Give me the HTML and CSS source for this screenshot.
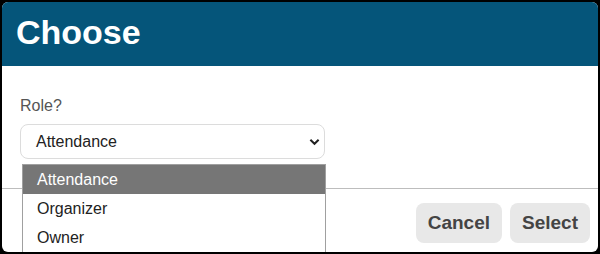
FILE: index.html
```html
<!DOCTYPE html>
<html lang="en">
<head>
    <meta charset="UTF-8">
    <title>Choose</title>
    <link rel="stylesheet" href="styles.css">
</head>
<body>
    <div class="dialog">
        <div class="dialog-header">
            <h1>Choose</h1>
        </div>
        <div class="dialog-body">
            <div class="field-label">Role?</div>
            <div class="select-box">
                <span>Attendance</span>
                <svg class="chevron" viewBox="0 0 12 8"><polyline points="1.5,1.5 6,6 10.5,1.5" fill="none" stroke="#222" stroke-width="2.2"/></svg>
            </div>
        </div>
        <div class="dialog-footer">
            <button class="btn">Cancel</button>
            <button class="btn">Select</button>
        </div>
        <div class="options">
            <div class="option selected">Attendance</div>
            <div class="option">Organizer</div>
            <div class="option">Owner</div>
        </div>
    </div>
</body>
</html>
```

FILE: styles.css
```css
body {
    background-color: #000;
    margin: 0;
    padding: 2px;
    font-family: "Liberation Sans", Arial, sans-serif;
}
.dialog {
    position: relative;
    background: #fff;
    border-radius: 6px;
    height: 250px;
    overflow: hidden;
    display: flex;
    flex-direction: column;
}
.dialog-header {
    background: #05557a;
    padding: 11px 14px 14px;
}
.dialog-header h1 {
    margin: 0;
    color: #fff;
    font-size: 34px;
    line-height: 39px;
    font-weight: bold;
}
.dialog-body {
    padding: 31px 18px 29px;
}
.field-label {
    color: #555;
    font-size: 16px;
    line-height: 18px;
    margin-bottom: 9px;
}
.select-box {
    width: 305px;
    height: 35px;
    box-sizing: border-box;
    border: 1px solid #dcdcdc;
    border-radius: 8px;
    padding: 0 4px 0 15px;
    display: flex;
    align-items: center;
    justify-content: space-between;
    font-size: 16px;
    color: #222;
}
.chevron {
    width: 11px;
    height: 8px;
}
.dialog-footer {
    border-top: 1px solid #bdbdbd;
    flex: 1;
    display: flex;
    justify-content: flex-end;
    align-items: flex-start;
    gap: 8px;
    padding: 14px 8px 0;
}
.btn {
    font-family: "Liberation Sans", Arial, sans-serif;
    font-size: 19px;
    font-weight: bold;
    color: #444;
    background: #e8e8e8;
    border: none;
    border-radius: 8px;
    height: 40px;
    padding: 0 12px;
}
.options {
    position: absolute;
    left: 20px;
    top: 162px;
    width: 302px;
    border: 1px solid #a0a0a0;
    background: #fff;
}
.option {
    height: 29px;
    line-height: 29px;
    padding-left: 14px;
    font-size: 16px;
    color: #222;
}
.option.selected {
    background: #767676;
    color: #fff;
}
```
